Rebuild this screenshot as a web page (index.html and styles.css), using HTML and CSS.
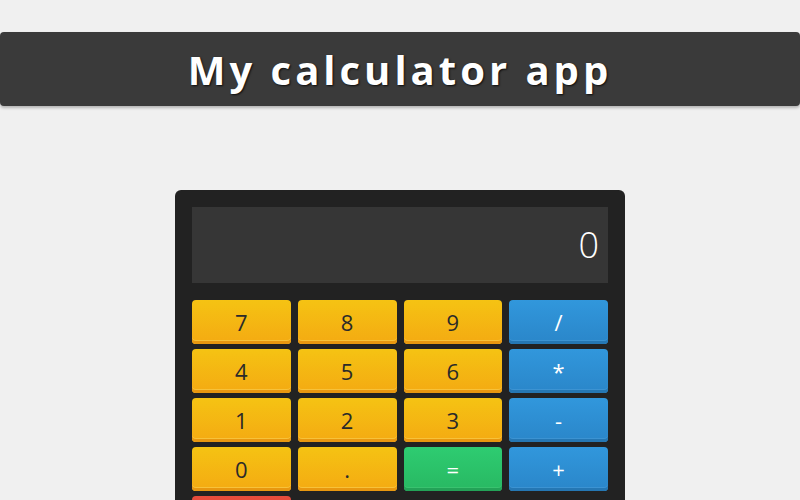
FILE: index.html
```html
<!DOCTYPE html>
<html>
<head>
<meta charset="utf-8">
<link rel="stylesheet" href="styles.css">
</head>
<body>
<header class="topbar"><h1 class="title">My calculator app</h1></header>
<main class="stage">
  <div class="calc">
    <div class="display">0</div>
    <div class="keys">
      <button class="key num">7</button>
      <button class="key num">8</button>
      <button class="key num">9</button>
      <button class="key op">/</button>
      <button class="key num">4</button>
      <button class="key num">5</button>
      <button class="key num">6</button>
      <button class="key op">*</button>
      <button class="key num">1</button>
      <button class="key num">2</button>
      <button class="key num">3</button>
      <button class="key op">-</button>
      <button class="key num">0</button>
      <button class="key num">.</button>
      <button class="key eq">=</button>
      <button class="key op">+</button>
      <button class="key clear" aria-label="clear"></button>
    </div>
  </div>
</main>
</body>
</html>
```
FILE: styles.css
```css
html, body {
  margin: 0;
  padding: 0;
  background: #f0f0f0;
  font-family: "Open Sans", "Liberation Sans", sans-serif;
  overflow: hidden;
}
.topbar {
  margin-top: 32px;
  height: 74px;
  background: #3a3a3a;
  border-radius: 4px;
  box-shadow: 0 2px 3px rgba(0,0,0,0.25);
  display: flex;
  align-items: center;
  justify-content: center;
}
.title {
  margin: 0;
  color: #fff;
  font-size: 40px;
  font-weight: 700;
  letter-spacing: 4px;
  text-shadow: 1px 1px 2px rgba(0,0,0,0.8);
}
.stage {
  display: flex;
  justify-content: center;
  padding-top: 84px;
}
.calc {
  width: 416px;
  padding: 17px;
  background: #222222;
  border-radius: 6px;
}
.display {
  height: 76px;
  background: #363636;
  color: #fff;
  font-size: 36px;
  font-weight: 300;
  text-align: right;
  line-height: 76px;
  padding-right: 9px;
  box-sizing: border-box;
  margin-bottom: 17px;
}
.keys {
  display: grid;
  grid-template-columns: repeat(4, 1fr);
  column-gap: 7px;
  row-gap: 5px;
}
.key {
  height: 44px;
  border: none;
  border-radius: 4px;
  font-family: "Open Sans", "Liberation Sans", sans-serif;
  font-size: 22px;
  padding: 0;
  color: #2a2a2a;
  line-height: 40px;
}
.num {
  background: linear-gradient(#f5c313, #f4aa12);
  box-shadow: inset 0 -3px 0 #e8970f, inset 0 -4px 0 #f7c23a;
}
.op {
  background: linear-gradient(#3197dc, #2a86c9);
  box-shadow: inset 0 -3px 0 #2577b3, inset 0 -4px 0 #3c93d2;
  color: #fff;
}
.eq {
  background: linear-gradient(#2ecc71, #28b862);
  box-shadow: inset 0 -3px 0 #23a257, inset 0 -4px 0 #39c26f;
  color: #fff;
}
.clear {
  background: linear-gradient(#e74c3c, #d44030);
  box-shadow: inset 0 -3px 0 #c0392b;
  color: #fff;
}
```
